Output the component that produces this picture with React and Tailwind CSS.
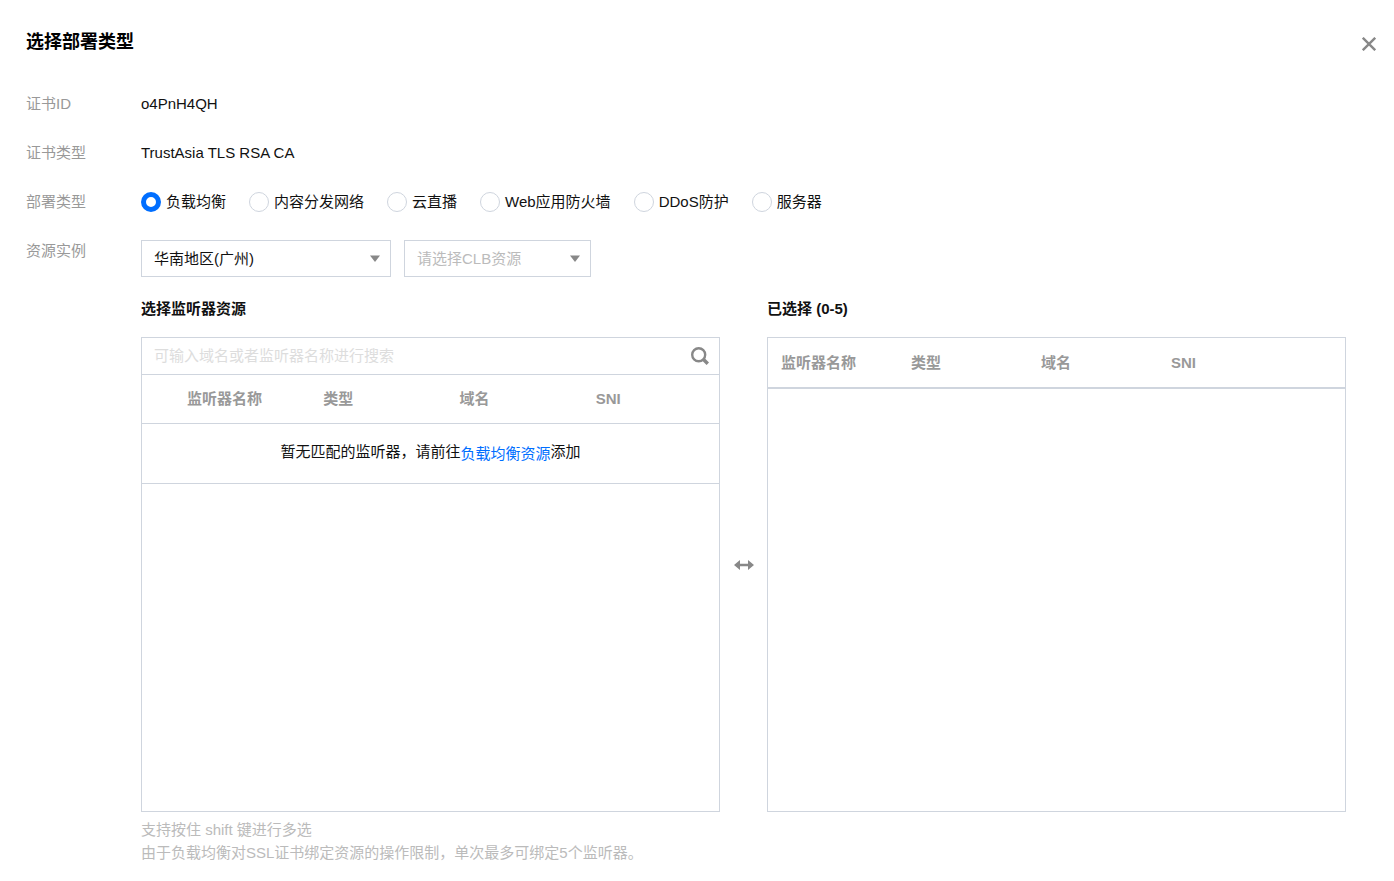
import React, { useState } from "react";

const DEPLOY_TYPES = [
  { value: "clb", label: "负载均衡" },
  { value: "cdn", label: "内容分发网络" },
  { value: "live", label: "云直播" },
  { value: "waf", label: "Web应用防火墙" },
  { value: "ddos", label: "DDoS防护" },
  { value: "cvm", label: "服务器" },
];

const COLUMNS = ["监听器名称", "类型", "域名", "SNI"];

function Row({ label, children }) {
  return (
    <div className="flex items-start">
      <div className="w-[115px] shrink-0 text-[#999]">{label}</div>
      <div className="flex-1 min-w-0">{children}</div>
    </div>
  );
}

function Select({ label, className, children, ...rest }) {
  return (
    <div className={`relative ${className}`}>
      <select
        aria-label={label}
        className="block w-full h-[37px] pl-3 pr-8 appearance-none border border-[#cfd5de] bg-white outline-none focus:border-[#006eff]"
        {...rest}
      >
        {children}
      </select>
      <svg className="absolute right-[10px] top-[15px] pointer-events-none" width="12" height="8" viewBox="0 0 12 8">
        <path d="M1 .5h10L6 7z" fill="#888" />
      </svg>
    </div>
  );
}

function HeadCells() {
  return COLUMNS.map((c) => (
    <th key={c} scope="col" className="pl-[13px] text-left font-bold">{c}</th>
  ));
}

export default function App() {
  const [type, setType] = useState("clb");
  const [region, setRegion] = useState("gz");
  const [clb, setClb] = useState("");
  const [keyword, setKeyword] = useState("");

  return (
    <div className="min-h-screen bg-white pt-[30px] pb-4 text-[15px] leading-6 text-[#111] font-['Liberation_Sans','Noto_Sans_CJK_SC',sans-serif]">
      <header className="flex items-start justify-between pl-[26px] pr-[18px]">
        <h1 className="text-[18px] leading-6 font-bold text-black">选择部署类型</h1>
        <button type="button" aria-label="关闭" className="mt-[7px]">
          <svg width="14" height="14" viewBox="0 0 14 14" stroke="#888" strokeWidth="2.4" fill="none">
            <path d="M.8.8l12.4 12.4M13.2.8L.8 13.2" />
          </svg>
        </button>
      </header>

      <div className="mt-[38px] pl-[26px] pr-12 flex flex-col gap-[25px]">
        <Row label="证书ID">o4PnH4QH</Row>
        <Row label="证书类型">TrustAsia TLS RSA CA</Row>

        <Row label="部署类型">
          <div role="radiogroup" aria-label="部署类型" className="flex flex-wrap gap-x-[23px]">
            {DEPLOY_TYPES.map((t) => (
              <label key={t.value} className="flex items-center gap-[5px]">
                <input
                  type="radio"
                  name="deployType"
                  checked={type === t.value}
                  onChange={() => setType(t.value)}
                  className="w-5 h-5 shrink-0 appearance-none rounded-full border border-[#cfd5de] bg-white checked:border-5 checked:border-[#006eff]"
                />
                {t.label}
              </label>
            ))}
          </div>
        </Row>

        <Row label="资源实例">
          <div className="pt-px flex gap-[13px]">
            <Select label="地区" className="w-[250px]" value={region} onChange={(e) => setRegion(e.target.value)}>
              <option value="gz">华南地区(广州)</option>
            </Select>
            <div className="text-[#bbb]">
              <Select label="CLB资源" className="w-[187px]" value={clb} onChange={(e) => setClb(e.target.value)}>
                <option value="">请选择CLB资源</option>
              </Select>
            </div>
          </div>

          <div className="mt-5 flex">
            <section className="flex-1 min-w-0">
              <h2 className="font-bold">选择监听器资源</h2>
              <div className="mt-4 h-[475px] border border-[#cfd5de]">
                <div className="flex items-center h-[37px] pl-3 pr-[10px] border-b border-[#cfd5de]">
                  <input
                    type="text"
                    aria-label="搜索监听器"
                    placeholder="可输入域名或者监听器名称进行搜索"
                    value={keyword}
                    onChange={(e) => setKeyword(e.target.value)}
                    className="flex-1 min-w-0 h-6 outline-none placeholder:text-[#ddd]"
                  />
                  <button type="button" aria-label="搜索">
                    <svg width="18" height="18" viewBox="0 0 18 18" stroke="#888" strokeWidth="2.4" fill="none">
                      <circle cx="7.7" cy="7.7" r="6.5" />
                      <path d="M11.8 11.8l5 5" strokeWidth="3.4" />
                    </svg>
                  </button>
                </div>
                <table className="w-full table-fixed">
                  <thead>
                    <tr className="h-12 border-b border-[#cfd5de] text-[#999]">
                      <td className="w-8"></td>
                      <HeadCells />
                    </tr>
                  </thead>
                  <tbody>
                    <tr className="h-[60px] border-b border-[#cfd5de]">
                      <td colSpan={5} className="text-center">
                        暂无匹配的监听器，请前往<a href="#clb" className="inline-block align-middle text-[#006eff]">负载均衡资源</a>添加
                      </td>
                    </tr>
                  </tbody>
                </table>
              </div>
            </section>

            <div className="w-[47px] shrink-0 pt-5 flex items-center justify-center">
              <svg width="20" height="10" viewBox="0 0 20 10" fill="#888">
                <path d="M0 5l6-5v3.8h8V0l6 5-6 5V6.2H6V10z" />
              </svg>
            </div>

            <section className="flex-1 min-w-0">
              <h2 className="font-bold">已选择 (0-5)</h2>
              <div className="mt-4 h-[475px] border border-[#cfd5de]">
                <table className="w-full table-fixed">
                  <thead>
                    <tr className="h-[50px] border-b-2 border-[#cfd5de] text-[#999]">
                      <HeadCells />
                      <td className="w-[57px]"></td>
                    </tr>
                  </thead>
                </table>
              </div>
            </section>
          </div>

          <div className="mt-[6px] leading-[23px] text-[#bbb]">
            <p>支持按住 shift 键进行多选</p>
            <p>由于负载均衡对SSL证书绑定资源的操作限制，单次最多可绑定5个监听器。</p>
          </div>
        </Row>
      </div>
    </div>
  );
}
